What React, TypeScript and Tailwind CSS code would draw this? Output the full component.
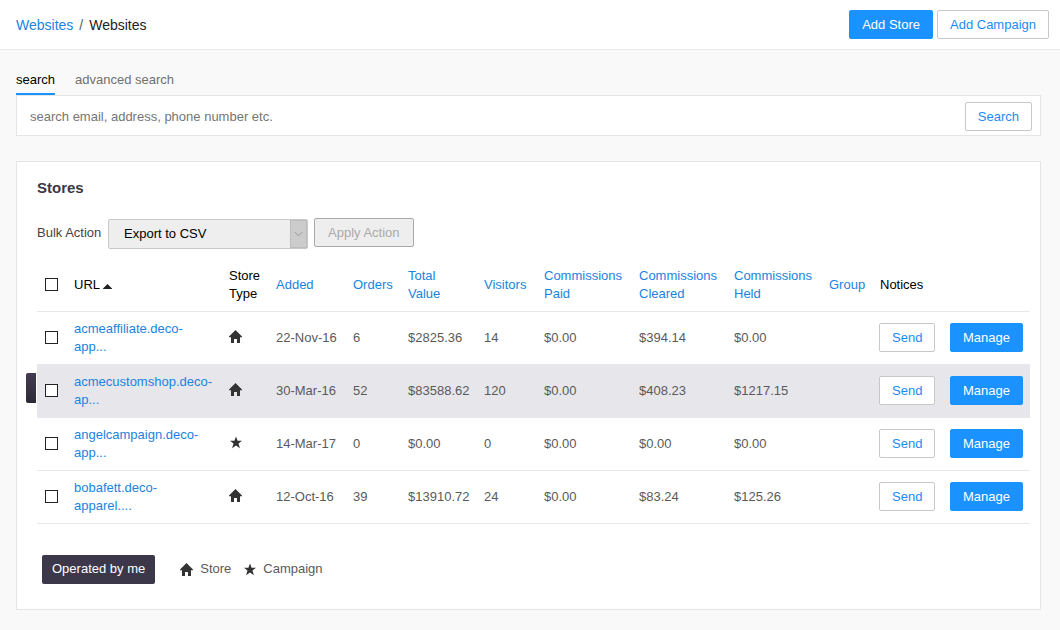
import React from "react";

type Kind = "store" | "campaign";

interface Site {
  url: [string, string];
  kind: Kind;
  added: string;
  orders: string;
  total: string;
  visitors: string;
  paid: string;
  cleared: string;
  held: string;
  mine?: boolean;
}

const sites: Site[] = [
  { url: ["acmeaffiliate.deco-", "app..."], kind: "store", added: "22-Nov-16", orders: "6", total: "$2825.36", visitors: "14", paid: "$0.00", cleared: "$394.14", held: "$0.00" },
  { url: ["acmecustomshop.deco-", "ap..."], kind: "store", added: "30-Mar-16", orders: "52", total: "$83588.62", visitors: "120", paid: "$0.00", cleared: "$408.23", held: "$1217.15", mine: true },
  { url: ["angelcampaign.deco-", "app..."], kind: "campaign", added: "14-Mar-17", orders: "0", total: "$0.00", visitors: "0", paid: "$0.00", cleared: "$0.00", held: "$0.00" },
  { url: ["bobafett.deco-", "apparel...."], kind: "store", added: "12-Oct-16", orders: "39", total: "$13910.72", visitors: "24", paid: "$0.00", cleared: "$83.24", held: "$125.26" },
];

const columns = [
  { label: "Added", width: "w-[77px]" },
  { label: "Orders", width: "w-[55px]" },
  { label: "Total Value", width: "w-[76px] pr-2" },
  { label: "Visitors", width: "w-[60px]" },
  { label: "Commissions Paid", width: "w-[95px]" },
  { label: "Commissions Cleared", width: "w-[95px]" },
  { label: "Commissions Held", width: "w-[95px]" },
  { label: "Group", width: "w-[50px]" },
];

function HomeIcon() {
  return (
    <svg viewBox="0 0 13 13" className="size-[13px] shrink-0 fill-[#333]" aria-hidden="true">
      <path d="M6.5 0 13 6.4V7.2H11V13H8V9H5V13H2V7.2H0V6.4Z" />
    </svg>
  );
}

function StarIcon() {
  return (
    <svg viewBox="0 0 13 13" className="size-[13px] shrink-0 fill-[#333]" aria-hidden="true">
      <path d="M7 0.4 8.6 4.7H13L9.5 7.6 10.9 12.2 7 9.5 3.1 12.2 4.5 7.6 1 4.7H5.4Z" />
    </svg>
  );
}

function Button({ primary = false, children }: { primary?: boolean; children: React.ReactNode }) {
  const look = primary
    ? "border-[#1a92ff] bg-[#1a92ff] text-white"
    : "border-[#c8c8c8] bg-white text-[#1a8cf5]";
  return (
    <button type="button" className={`h-[29px] cursor-pointer rounded-xs border px-3 whitespace-nowrap ${look}`}>
      {children}
    </button>
  );
}

function Check({ label }: { label: string }) {
  return (
    <input
      type="checkbox"
      aria-label={label}
      className="block size-[13px] appearance-none border border-[#222] bg-white checked:bg-[#222]"
    />
  );
}

export default function App() {
  return (
    <div className="min-h-screen bg-[#f9f9f9] font-['Liberation_Sans',Arial,sans-serif] text-[13px] leading-[18px] text-[#5a5a5a]">
      <header className="flex h-[50px] items-center justify-between border-b border-[#e8e8e8] bg-white pr-[11px] pl-4">
        <nav aria-label="Breadcrumb" className="flex gap-1.5 text-sm">
          <a href="#websites" className="text-[#1a83e0]">Websites</a>
          <span>/</span>
          <span className="text-[#222]">Websites</span>
        </nav>
        <div className="flex gap-1">
          <Button primary>Add Store</Button>
          <Button>Add Campaign</Button>
        </div>
      </header>

      <main className="pt-[21px] pr-[19px] pb-5 pl-4">
        <div className="flex gap-5">
          <button type="button" className="cursor-pointer border-b-2 border-[#1a92ff] pb-1 text-black">search</button>
          <button type="button" className="cursor-pointer border-b-2 border-transparent pb-1 text-[#707070]">advanced search</button>
        </div>
        <form className="flex items-center border border-[#e5e5e5] bg-white pt-1.5 pr-2 pb-1 pl-[13px]">
          <input
            type="text"
            aria-label="Search"
            placeholder="search email, address, phone number etc."
            className="min-w-0 flex-1 outline-none placeholder:text-[#757575]"
          />
          <Button>Search</Button>
        </form>

        <section className="mt-[25px] border border-[#e5e5e5] bg-white pt-[17px] pr-2.5 pb-[25px] pl-5">
          <h2 className="text-[15px] font-bold text-[#3b3747]">Stores</h2>
          <div className="mt-[21px] flex items-start">
            <label htmlFor="bulk" className="min-w-[67px] leading-[29px] text-[#444]">Bulk Action</label>
            <div className="relative mt-px ml-1">
              <select
                id="bulk"
                className="block h-[30px] w-[200px] appearance-none rounded-xs border border-[#c8c8c8] bg-[#eee] pl-[15px] text-black"
              >
                <option>Export to CSV</option>
              </select>
              <span className="pointer-events-none absolute inset-y-px right-px flex w-[17px] items-center justify-center border border-[#bdbdbd] bg-[#ccc]">
                <svg viewBox="0 0 9 6" className="h-1.5 w-[9px] fill-none stroke-[#999]" aria-hidden="true">
                  <path d="M0.5 0.8 4.5 4.8 8.5 0.8" />
                </svg>
              </span>
            </div>
            <button type="button" disabled className="ml-1.5 h-[29px] rounded-xs border border-[#aaa] bg-[#eee] px-[13px] text-[#aaa]">
              Apply Action
            </button>
          </div>

          <table className="mt-[9px] w-full table-fixed border-collapse text-left">
            <thead>
              <tr className="h-[53px] border-b border-[#e8e8e8] text-black">
                <th scope="col" className="w-[29px] px-2"><Check label="Select all" /></th>
                <th scope="col" className="w-[155px] pt-0.5 pl-2 font-normal">
                  <span className="flex items-center gap-[3px]">
                    URL
                    <svg viewBox="0 0 9 5" className="mt-0.5 h-[5px] w-[9px] fill-[#222]" aria-hidden="true">
                      <path d="M4.5 0 9 4.4V5H0V4.4Z" />
                    </svg>
                  </span>
                </th>
                <th scope="col" className="w-[47px] px-2 pt-0.5 font-normal">Store Type</th>
                {columns.map((c) => (
                  <th key={c.label} scope="col" className={`pt-0.5 pl-2 font-normal ${c.width}`}>
                    <a href="#sort" className="text-[#1a83e0]">{c.label}</a>
                  </th>
                ))}
                <th scope="col" className="w-[71px] pt-0.5 pl-[9px] font-normal">Notices</th>
                <td className="w-[88px]" />
              </tr>
            </thead>
            <tbody>
              {sites.map((s) => (
                <tr key={s.url[0]} className={`h-[53px] border-b ${s.mine ? "border-[#e7e6eb] bg-[#e7e6eb]" : "border-[#e8e8e8]"}`}>
                  <td className="relative px-2">
                    {s.mine && (
                      <span className="absolute top-2 -left-[11px] h-[30px] w-2.5 rounded-l-xs bg-linear-to-b from-[#433c50] to-[#2e2938]" />
                    )}
                    <Check label={`Select ${s.url.join("")}`} />
                  </td>
                  <td className="pl-2 whitespace-nowrap">
                    <a href="#site" className="text-[#1a83e0]">{s.url[0]}<br />{s.url[1]}</a>
                  </td>
                  <td className="px-2 pb-0.5">{s.kind === "store" ? <HomeIcon /> : <StarIcon />}</td>
                  <td className="pl-2">{s.added}</td>
                  <td className="pl-2">{s.orders}</td>
                  <td className="pl-2">{s.total}</td>
                  <td className="pl-2">{s.visitors}</td>
                  <td className="pl-2">{s.paid}</td>
                  <td className="pl-2">{s.cleared}</td>
                  <td className="pl-2">{s.held}</td>
                  <td />
                  <td className="pl-2"><Button>Send</Button></td>
                  <td className="pl-2"><Button primary>Manage</Button></td>
                </tr>
              ))}
            </tbody>
          </table>

          <div className="mt-[31px] flex items-center pl-[5px]">
            <span className="flex h-[29px] items-center rounded-xs bg-[#3d374a] px-2.5 text-white">Operated by me</span>
            <span className="ml-[25px] flex items-center gap-[7px]"><HomeIcon />Store</span>
            <span className="ml-3 flex items-center gap-[7px]"><StarIcon />Campaign</span>
          </div>
        </section>
      </main>
    </div>
  );
}
